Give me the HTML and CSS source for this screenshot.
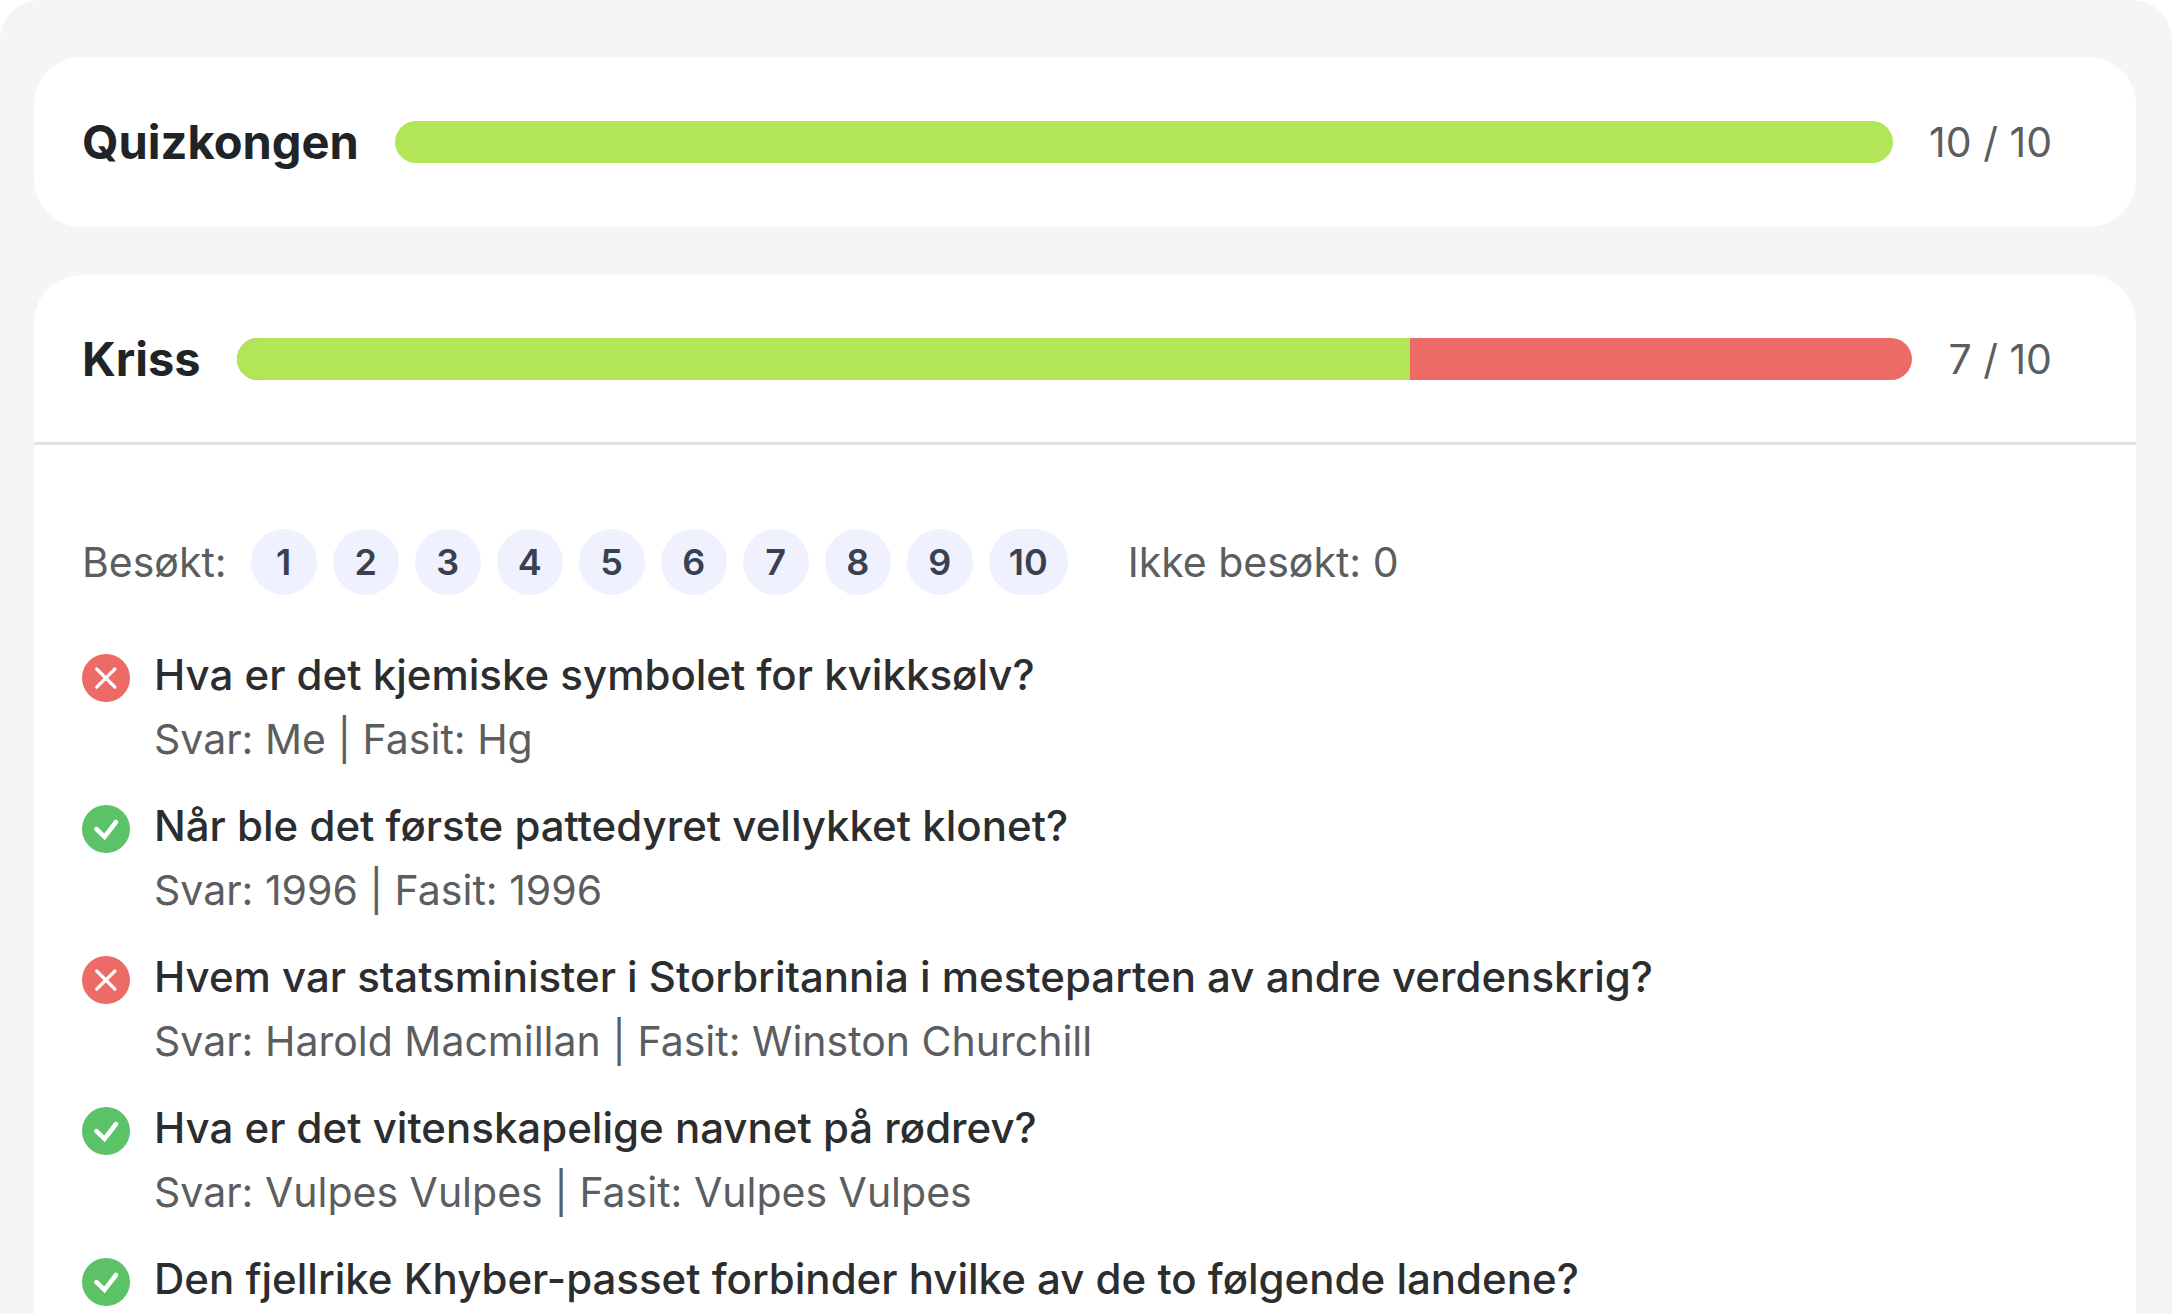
FILE: index.html
```
<!DOCTYPE html>
<html lang="no">
<head>
<meta charset="UTF-8">
<title>Quizkongen</title>
<link rel="stylesheet" href="styles.css">
</head>

<body>
<svg class="sprite" width="0" height="0" aria-hidden="true">
	<symbol id="wrong" viewBox="0 0 48 48">
		<circle cx="24" cy="24" r="24" fill="#ec6b66"/>
		<path d="M14.7 15l18.2 18.2M32.9 15L14.7 33.2" fill="none" stroke="#fff" stroke-width="3.2" stroke-linecap="round"/>
	</symbol>
	<symbol id="right" viewBox="0 0 48 48">
		<circle cx="24" cy="24" r="24" fill="#5bc267"/>
		<path d="M14.5 24.2l8 7.6L34 17" fill="none" stroke="#fff" stroke-width="4.6" stroke-linecap="round"/>
	</symbol>
</svg>

<main class="results">
	<section class="card">
		<header class="player">
			<h2>Quizkongen</h2>
			<div class="bar"><span class="bar-right" style="width: 100%"></span></div>
			<span class="score">10 / 10</span>
		</header>
	</section>

	<section class="card card--open">
		<header class="player">
			<h2>Kriss</h2>
			<div class="bar"><span class="bar-right" style="width: 70%"></span></div>
			<span class="score">7 / 10</span>
		</header>

		<div class="details">
			<div class="visited">
				<span>Besøkt:</span>
				<ol class="posts">
					<li>1</li>
					<li>2</li>
					<li>3</li>
					<li>4</li>
					<li>5</li>
					<li>6</li>
					<li>7</li>
					<li>8</li>
					<li>9</li>
					<li>10</li>
				</ol>
				<span class="not-visited">Ikke besøkt: 0</span>
			</div>

			<ul class="answers">
				<li>
					<svg class="icon" role="img" aria-label="Feil"><use href="#wrong"/></svg>
					<div>
						<h3>Hva er det kjemiske symbolet for kvikksølv?</h3>
						<p>Svar: Me | Fasit: Hg</p>
					</div>
				</li>
				<li>
					<svg class="icon" role="img" aria-label="Riktig"><use href="#right"/></svg>
					<div>
						<h3>Når ble det første pattedyret vellykket klonet?</h3>
						<p>Svar: 1996 | Fasit: 1996</p>
					</div>
				</li>
				<li>
					<svg class="icon" role="img" aria-label="Feil"><use href="#wrong"/></svg>
					<div>
						<h3>Hvem var statsminister i Storbritannia i mesteparten av andre verdenskrig?</h3>
						<p>Svar: Harold Macmillan | Fasit: Winston Churchill</p>
					</div>
				</li>
				<li>
					<svg class="icon" role="img" aria-label="Riktig"><use href="#right"/></svg>
					<div>
						<h3>Hva er det vitenskapelige navnet på rødrev?</h3>
						<p>Svar: Vulpes Vulpes | Fasit: Vulpes Vulpes</p>
					</div>
				</li>
				<li>
					<svg class="icon" role="img" aria-label="Riktig"><use href="#right"/></svg>
					<div>
						<h3>Den fjellrike Khyber-passet forbinder hvilke av de to følgende landene?</h3>
					</div>
				</li>
			</ul>
		</div>
	</section>
</main>
</body>
</html>
```
FILE: styles.css
```
* {
	box-sizing: border-box;
}

body {
	margin: 0;
	background: #fff;
	color: #5b5d5f;
	font-family: Inter, "Liberation Sans", sans-serif;
	font-size: 41px;
	line-height: 64px;
}

h2, h3, p, ol, ul {
	margin: 0;
	padding: 0;
}

ol, ul {
	list-style: none;
}

.sprite {
	position: absolute;
}

.results {
	display: flex;
	flex-direction: column;
	gap: 48px;
	min-height: 100vh;
	padding: 57px 36px 0 34px;
	border-radius: 40px 40px 0 0;
	background: #f5f5f5;
}

.card {
	border-radius: 48px;
	background: #fff;
}

.card--open {
	flex: 1;
	border-radius: 48px 48px 0 0;
}

.card--open .player {
	border-bottom: 3px solid #e0e1e2;
}

.player {
	display: flex;
	align-items: center;
	gap: 36px;
	height: 170px;
	padding: 0 84px 0 48px;
}

.player h2 {
	color: #212427;
	font-size: 47px;
	font-weight: 700;
}

.bar {
	flex: 1;
	height: 42px;
	border-radius: 21px;
	background: #ec6b66;
	overflow: hidden;
}

.bar-right {
	display: block;
	height: 100%;
	background: #b2e558;
}

.score {
	white-space: nowrap;
}

.details {
	padding: 84px 48px 0;
}

.visited {
	display: flex;
	align-items: center;
	gap: 24px;
}

.posts {
	display: flex;
	gap: 16px;
}

.posts li {
	min-width: 66px;
	padding: 0 20px;
	border-radius: 33px;
	background: #eff1fe;
	color: #394050;
	font-size: 36px;
	font-weight: 600;
	line-height: 66px;
	text-align: center;
}

.not-visited {
	margin-left: 36px;
}

.answers {
	display: grid;
	gap: 23px;
	margin-top: 48px;
}

.answers li {
	display: flex;
	gap: 24px;
}

.answers h3 {
	color: #2c2d2e;
	font-size: 42px;
	font-weight: 500;
}

.icon {
	flex: none;
	width: 48px;
	height: 48px;
	margin-top: 11px;
}
```
